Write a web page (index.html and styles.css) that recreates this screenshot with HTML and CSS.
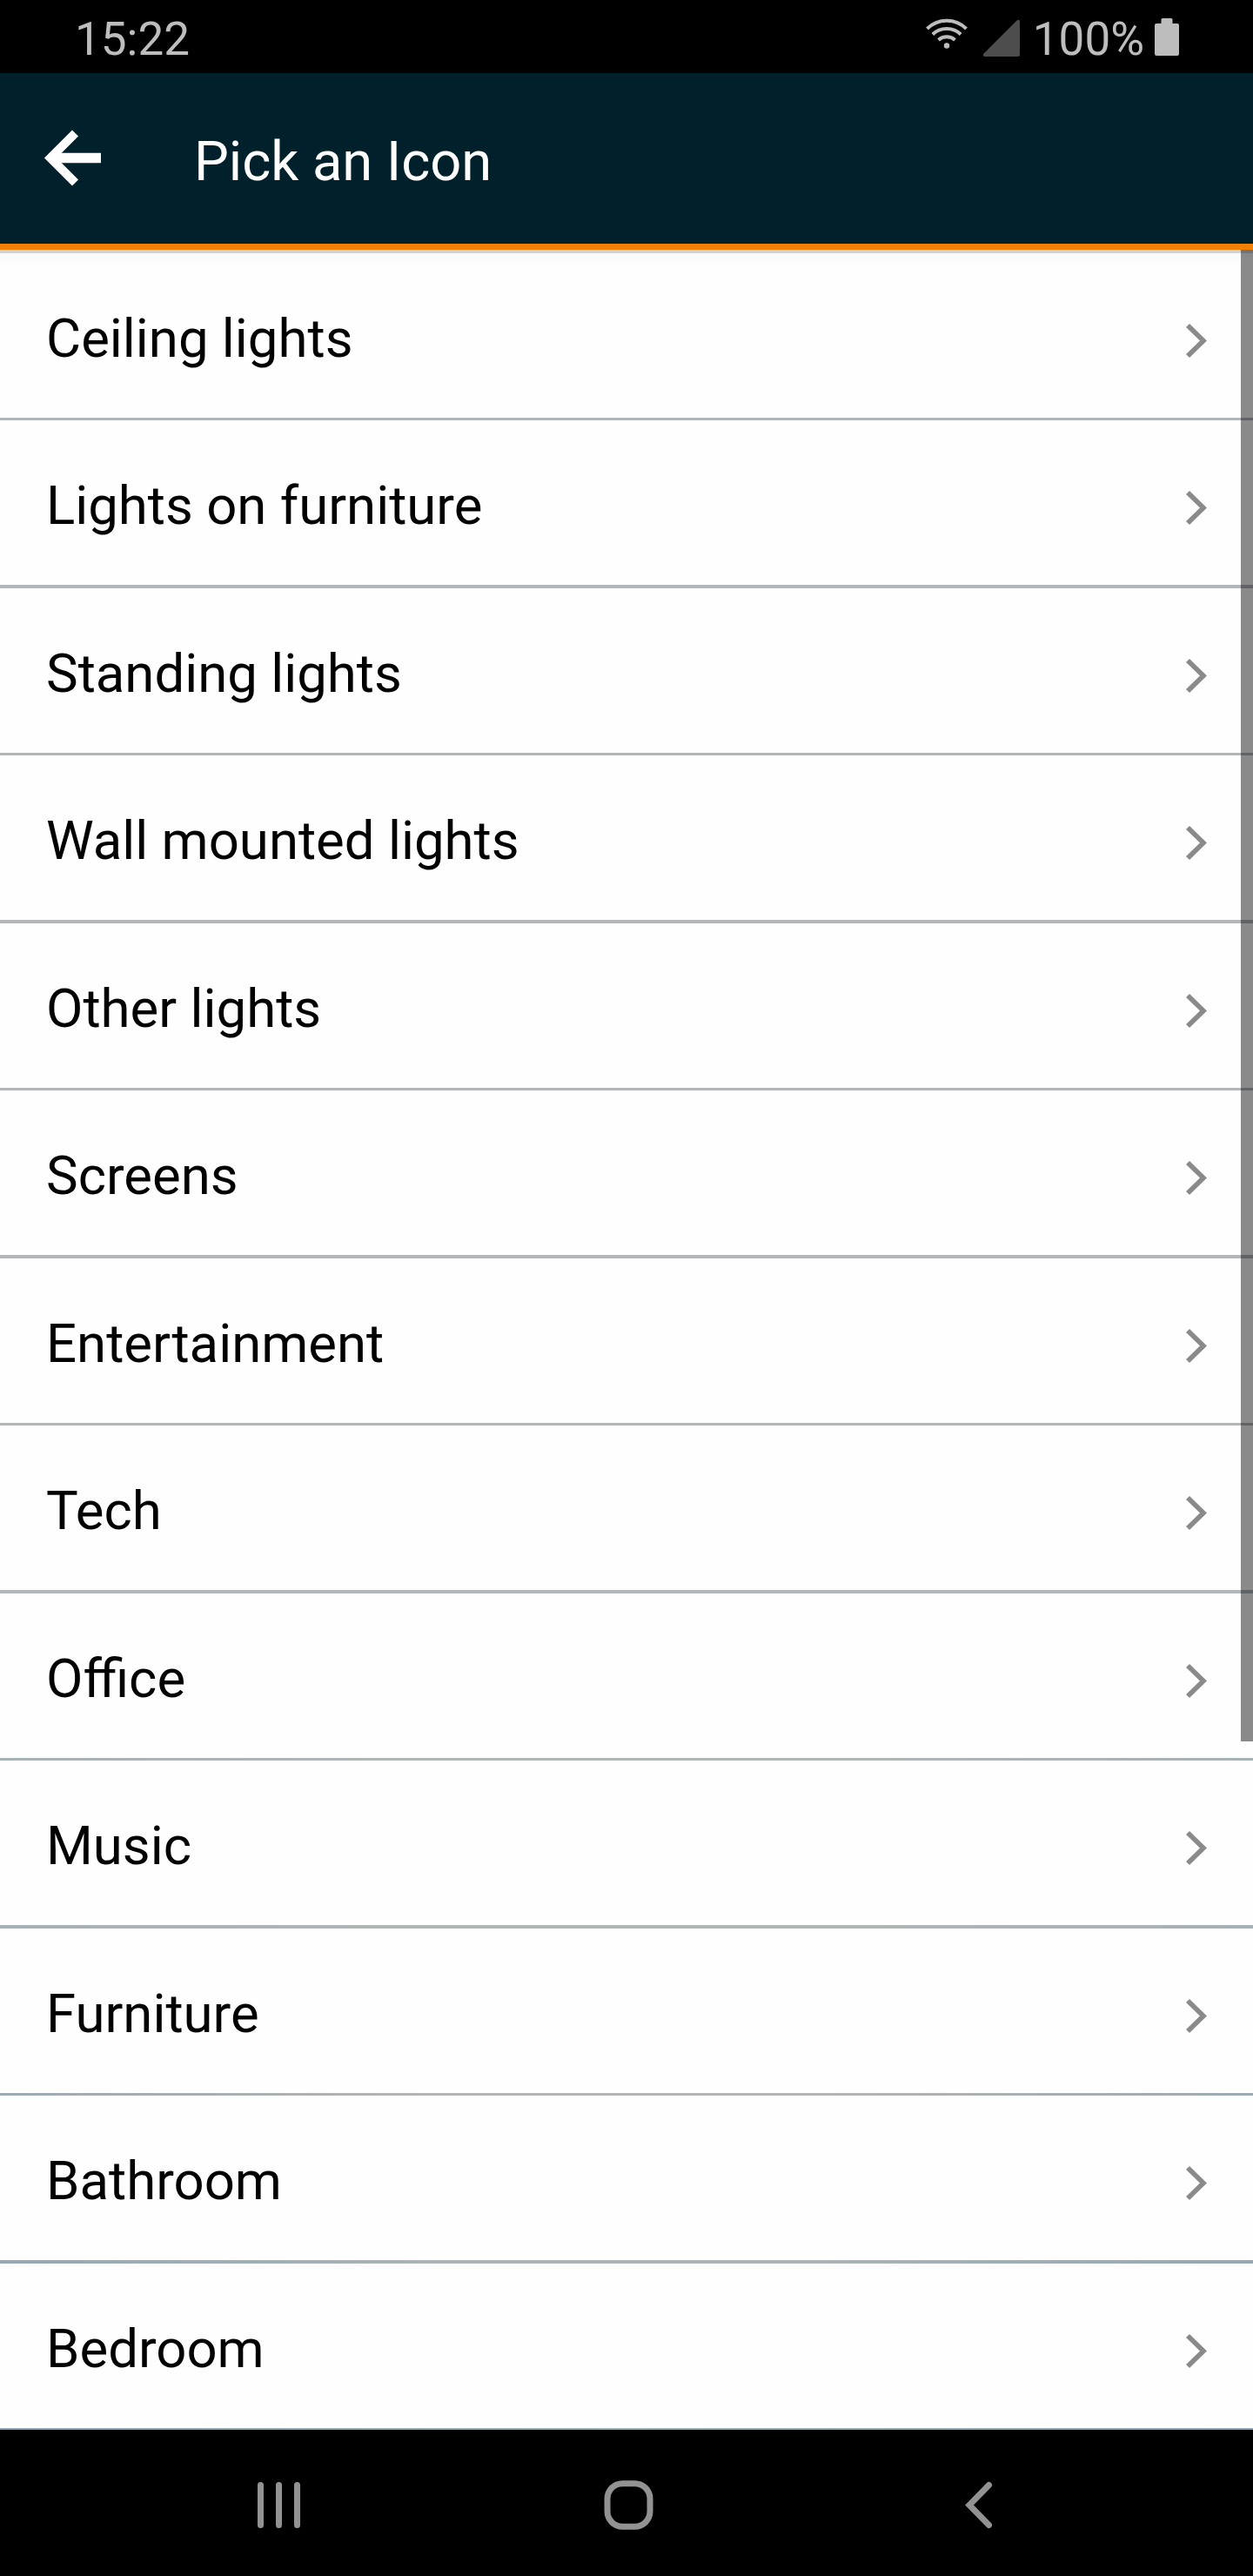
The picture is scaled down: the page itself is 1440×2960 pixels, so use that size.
FILE: index.html
```html
<!DOCTYPE html>
<html lang="en">
<head>
<meta charset="utf-8">
<title>Pick an Icon</title>
<link rel="stylesheet" href="styles.css">
</head>
<body>
<div class="status-bar">
  <span class="clock">15:22</span>
  <div class="indicators">
    <svg class="wifi" width="48" height="36" viewBox="0 0 48 36" fill="none" stroke="#bdbdbd" stroke-width="4">
      <path d="M1.500 12a32 32 0 0 1 45 0M7.800 18.500a23.500 23.500 0 0 1 32.400 0M14.500 25a14.200 14.200 0 0 1 19 0"/>
      <circle cx="24" cy="31.500" r="3.200" fill="#bdbdbd" stroke="none"/>
    </svg>
    <svg class="signal" width="42" height="42" viewBox="0 0 42 42"><path d="M38.600.6Q42-1.500 42 2V40Q42 42 40 42H2Q-1.500 42 .6 38.600Z" fill="#4d4d4d"/></svg>
    <span class="percent">100%</span>
    <svg class="battery" width="28" height="43" viewBox="0 0 28 43"><path d="M9 0H19Q20.500 0 20.500 1.500V6H26Q28 6 28 8V41Q28 43 26 43H2Q0 43 0 41V8Q0 6 2 6H7.500V1.500Q7.500 0 9 0Z" fill="#bdbdbd"/></svg>
  </div>
</div>
<header class="app-bar">
  <svg class="back" width="66" height="66" viewBox="0 0 66 66" fill="none" stroke="#fff"><path d="M36.500 4 8 32.500 36.500 61" stroke-width="10"/><path d="M9 32.500H66" stroke-width="11.500"/></svg>
  <h1 class="title">Pick an Icon</h1>
</header>
<main class="content">
  <ul class="list">
    <li class="row">Ceiling lights<i class="chevron"></i></li>
    <li class="row">Lights on furniture<i class="chevron"></i></li>
    <li class="row">Standing lights<i class="chevron"></i></li>
    <li class="row">Wall mounted lights<i class="chevron"></i></li>
    <li class="row">Other lights<i class="chevron"></i></li>
    <li class="row">Screens<i class="chevron"></i></li>
    <li class="row">Entertainment<i class="chevron"></i></li>
    <li class="row">Tech<i class="chevron"></i></li>
    <li class="row">Office<i class="chevron"></i></li>
    <li class="row">Music<i class="chevron"></i></li>
    <li class="row">Furniture<i class="chevron"></i></li>
    <li class="row">Bathroom<i class="chevron"></i></li>
    <li class="row">Bedroom<i class="chevron"></i></li>
  </ul>
  <div class="scrollbar"></div>
</main>
<nav class="nav-bar">
  <svg class="recents" width="49" height="57" viewBox="0 0 49 57" fill="none" stroke="#929292" stroke-width="7" stroke-linecap="round"><path d="M3.500 5.500V51.500M24.500 5.500V51.500M45.500 5.500V51.500"/></svg>
  <svg class="home" width="57" height="57" viewBox="0 0 57 57" fill="none" stroke="#929292" stroke-width="7"><rect x="4" y="3.700" width="49" height="49.600" rx="17.500"/></svg>
  <svg class="nav-back" width="32" height="57" viewBox="0 0 32 57" fill="none" stroke="#929292" stroke-width="7" stroke-linecap="round"><path d="M27.500 5.500 5 28.500 27.500 51.500"/></svg>
</nav>
</body>
</html>
```

FILE: styles.css
```css
* { box-sizing: border-box; }
body {
  margin: 0;
  width: 1440px;
  height: 2960px;
  display: flex;
  flex-direction: column;
  overflow: hidden;
  background: #000;
  font-family: Roboto, sans-serif;
}
.status-bar {
  height: 84px;
  display: flex;
  justify-content: space-between;
  padding: 0 85px 0 86px;
  color: #bdbdbd;
  font-size: 53px;
  line-height: 90px;
}
.indicators { display: flex; align-items: flex-start; }
.wifi { margin: 21px 18px 0 0; }
.signal { margin: 23px 15px 0 0; }
.percent { margin-right: 12px; }
.battery { margin-top: 21px; }
.app-bar {
  height: 203px;
  display: flex;
  align-items: flex-start;
  background: #00212b;
  border-bottom: 7px solid #f57f00;
  padding-left: 50px;
}
.back { margin-top: 65px; }
.title {
  margin: 61px 0 0 107px;
  font-size: 63.2px;
  font-weight: 400;
  line-height: 80px;
  color: #fff;
}
.content { position: relative; height: 2505px; background: #fefefe; }
.list {
  margin: 0;
  padding: 0;
  list-style: none;
  border-top: 4px solid #d0d4d7;
}
.row {
  display: flex;
  justify-content: space-between;
  height: 192px;
  padding: 61px 53px 0 53px;
  border: 0 solid #b0b6b9;
  border-bottom-width: 3px;
  font-size: 61.7px;
  line-height: 74px;
  color: #000;
}
.row:first-child { background: linear-gradient(#fafafa, #fefefe 16px); }
.row:nth-child(even) { height: 193px; border-bottom-width: 4px; }
.row:nth-child(n + 9) { border-image: linear-gradient(90deg, #a5b1b8, #b0b5b7 30%, #b0b5b7 70%, #a5b1b8) 1; }
.row:nth-child(n + 11) { border-image: linear-gradient(90deg, #9aabb6, #b1b5b7 35%, #b1b5b7 65%, #9aabb5) 1; }
.row:nth-child(n + 12) { border-image: linear-gradient(90deg, #94a9b5, #abb3b7 35%, #abb3b7 65%, #94a9b4) 1; }
.row:last-child {
  height: 191px;
  border-bottom-width: 2px;
  border-image: linear-gradient(90deg, #8ba5b1, #9dadb3 50%, #8ba5b1) 1;
}
.chevron {
  width: 24px;
  height: 39px;
  margin-top: 20px;
  background: #8a8a8a;
  clip-path: polygon(0 4px, 4px 0, 24px 19.5px, 4px 39px, 0 35px, 16px 19.5px);
}
.scrollbar {
  position: absolute;
  top: 0;
  right: 0;
  width: 14px;
  height: 1714px;
  background: rgba(0, 0, 0, .455);
}
.nav-bar {
  height: 168px;
  display: flex;
  padding: 58px 0 0 296px;
}
.home { margin-left: 349px; }
.nav-back { margin-left: 358px; }
```
